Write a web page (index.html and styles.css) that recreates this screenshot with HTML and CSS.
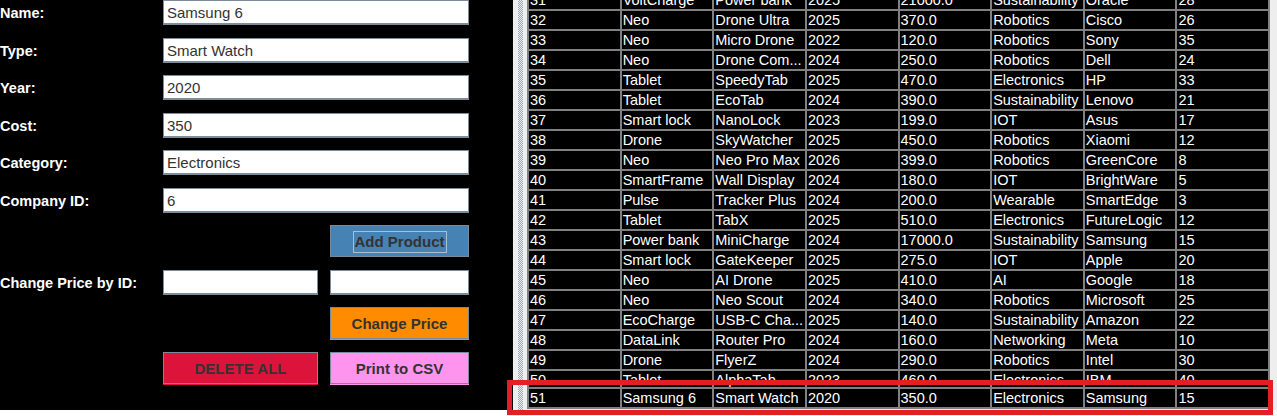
FILE: index.html
```html
<!DOCTYPE html>
<html lang="en">
<head>
<meta charset="utf-8">
<title>Product Manager</title>
<link rel="stylesheet" href="styles.css">
</head>
<body>
<div class="window">
  <div class="form-panel">
    <div class="label">Name:</div>
    <div class="field">Samsung 6</div>
    <div class="label">Type:</div>
    <div class="field">Smart Watch</div>
    <div class="label">Year:</div>
    <div class="field">2020</div>
    <div class="label">Cost:</div>
    <div class="field">350</div>
    <div class="label">Category:</div>
    <div class="field">Electronics</div>
    <div class="label">Company ID:</div>
    <div class="field">6</div>
    <div class="btn btn-add"><span class="focus">Add Product</span></div>
    <div class="label">Change Price by ID:</div>
    <div class="field half"></div>
    <div class="field half"></div>
    <div class="btn btn-change">Change Price</div>
    <div class="btn btn-delete">DELETE ALL</div>
    <div class="btn btn-csv">Print to CSV</div>
  </div>
  <div class="divider"><div class="bumps"></div></div>
  <div class="table-pane">
    <div class="table">
      <div>31</div><div>VoltCharge</div><div>Power bank</div><div>2025</div><div>21000.0</div><div>Sustainability</div><div>Oracle</div><div>28</div>
      <div>32</div><div>Neo</div><div>Drone Ultra</div><div>2025</div><div>370.0</div><div>Robotics</div><div>Cisco</div><div>26</div>
      <div>33</div><div>Neo</div><div>Micro Drone</div><div>2022</div><div>120.0</div><div>Robotics</div><div>Sony</div><div>35</div>
      <div>34</div><div>Neo</div><div>Drone Com...</div><div>2024</div><div>250.0</div><div>Robotics</div><div>Dell</div><div>24</div>
      <div>35</div><div>Tablet</div><div>SpeedyTab</div><div>2025</div><div>470.0</div><div>Electronics</div><div>HP</div><div>33</div>
      <div>36</div><div>Tablet</div><div>EcoTab</div><div>2024</div><div>390.0</div><div>Sustainability</div><div>Lenovo</div><div>21</div>
      <div>37</div><div>Smart lock</div><div>NanoLock</div><div>2023</div><div>199.0</div><div>IOT</div><div>Asus</div><div>17</div>
      <div>38</div><div>Drone</div><div>SkyWatcher</div><div>2025</div><div>450.0</div><div>Robotics</div><div>Xiaomi</div><div>12</div>
      <div>39</div><div>Neo</div><div>Neo Pro Max</div><div>2026</div><div>399.0</div><div>Robotics</div><div>GreenCore</div><div>8</div>
      <div>40</div><div>SmartFrame</div><div>Wall Display</div><div>2024</div><div>180.0</div><div>IOT</div><div>BrightWare</div><div>5</div>
      <div>41</div><div>Pulse</div><div>Tracker Plus</div><div>2024</div><div>200.0</div><div>Wearable</div><div>SmartEdge</div><div>3</div>
      <div>42</div><div>Tablet</div><div>TabX</div><div>2025</div><div>510.0</div><div>Electronics</div><div>FutureLogic</div><div>12</div>
      <div>43</div><div>Power bank</div><div>MiniCharge</div><div>2024</div><div>17000.0</div><div>Sustainability</div><div>Samsung</div><div>15</div>
      <div>44</div><div>Smart lock</div><div>GateKeeper</div><div>2025</div><div>275.0</div><div>IOT</div><div>Apple</div><div>20</div>
      <div>45</div><div>Neo</div><div>AI Drone</div><div>2025</div><div>410.0</div><div>AI</div><div>Google</div><div>18</div>
      <div>46</div><div>Neo</div><div>Neo Scout</div><div>2024</div><div>340.0</div><div>Robotics</div><div>Microsoft</div><div>25</div>
      <div>47</div><div>EcoCharge</div><div>USB-C Cha...</div><div>2025</div><div>140.0</div><div>Sustainability</div><div>Amazon</div><div>22</div>
      <div>48</div><div>DataLink</div><div>Router Pro</div><div>2024</div><div>160.0</div><div>Networking</div><div>Meta</div><div>10</div>
      <div>49</div><div>Drone</div><div>FlyerZ</div><div>2024</div><div>290.0</div><div>Robotics</div><div>Intel</div><div>30</div>
      <div>50</div><div>Tablet</div><div>AlphaTab</div><div>2023</div><div>460.0</div><div>Electronics</div><div>IBM</div><div>40</div>
      <div>51</div><div>Samsung 6</div><div>Smart Watch</div><div>2020</div><div>350.0</div><div>Electronics</div><div>Samsung</div><div>15</div>
    </div>
  </div>
</div>
<div class="highlight"></div>
</body>
</html>
```
FILE: styles.css
```css
* { box-sizing: border-box; }

body {
  margin: 0;
  background: #ffffff;
  font-family: "Liberation Sans", Arial, sans-serif;
}

.window {
  display: flex;
  width: 1277px;
  height: 410px;
  background: #eeeeee;
  overflow: hidden;
}

.form-panel {
  width: 513px;
  flex: none;
  background: #000000;
  display: grid;
  grid-template-columns: 151px 155px 139px;
  grid-template-rows: repeat(6, 25px) 32px 25px 32px 32px;
  column-gap: 12px;
  row-gap: 12.5px;
  align-content: start;
}

.label {
  color: #ffffff;
  font-weight: bold;
  font-size: 14.5px;
  align-self: center;
  white-space: nowrap;
  grid-column: 1;
  padding-top: 1px;
}

.field {
  grid-column: 2 / 4;
  background: #ffffff;
  border: 1px solid #7d8c9b;
  border-bottom-width: 2px;
  font-size: 15px;
  color: #333333;
  padding: 1px 3px 0;
  display: flex;
  align-items: center;
}

.field.half { grid-column: auto; }

.btn {
  border: 1px solid #7a8a99;
  font-weight: bold;
  font-size: 15px;
  color: #333333;
  display: flex;
  align-items: center;
  justify-content: center;
  grid-column: 3;
  padding-top: 1px;
}

.btn-add { background: #4682b4; }
.btn-change { background: #ff8c00; box-shadow: 0 1px 0 #ff8c00; }
.btn-delete { background: #dc143c; grid-column: 2; box-shadow: 0 1px 0 #dc143c; }
.btn-csv { background: #ff94ee; box-shadow: 0 1px 0 #ff94ee; }

.focus {
  display: inline-block;
  border: 1px solid #a9bed3;
  padding: 0 1px;
  line-height: 20px;
}

.divider {
  width: 14px;
  flex: none;
  background: #eeeeee;
  padding-left: 5px;
}

.bumps {
  width: 5px;
  height: 100%;
  background: repeating-conic-gradient(#9ca7b3 0 25%, transparent 0 50%) 0 0 / 2px 2px;
}

.table-pane {
  flex: 1;
  overflow: hidden;
  background: #eeeeee;
}

.table {
  width: 743px;
  margin-top: -11px;
  display: grid;
  grid-template-columns: repeat(8, 1fr);
  grid-template-rows: repeat(19, 18px) 16px 18px;
  gap: 2px;
  padding: 2px;
  background: #808080;
}

.table > div {
  background: #000000;
  color: #ffffff;
  font-size: 14.5px;
  line-height: 18px;
  padding-left: 1px;
  white-space: nowrap;
  overflow: hidden;
}

.highlight {
  position: absolute;
  left: 507px;
  top: 380px;
  width: 766px;
  height: 35px;
  border: 5px solid #e31e24;
}
```
